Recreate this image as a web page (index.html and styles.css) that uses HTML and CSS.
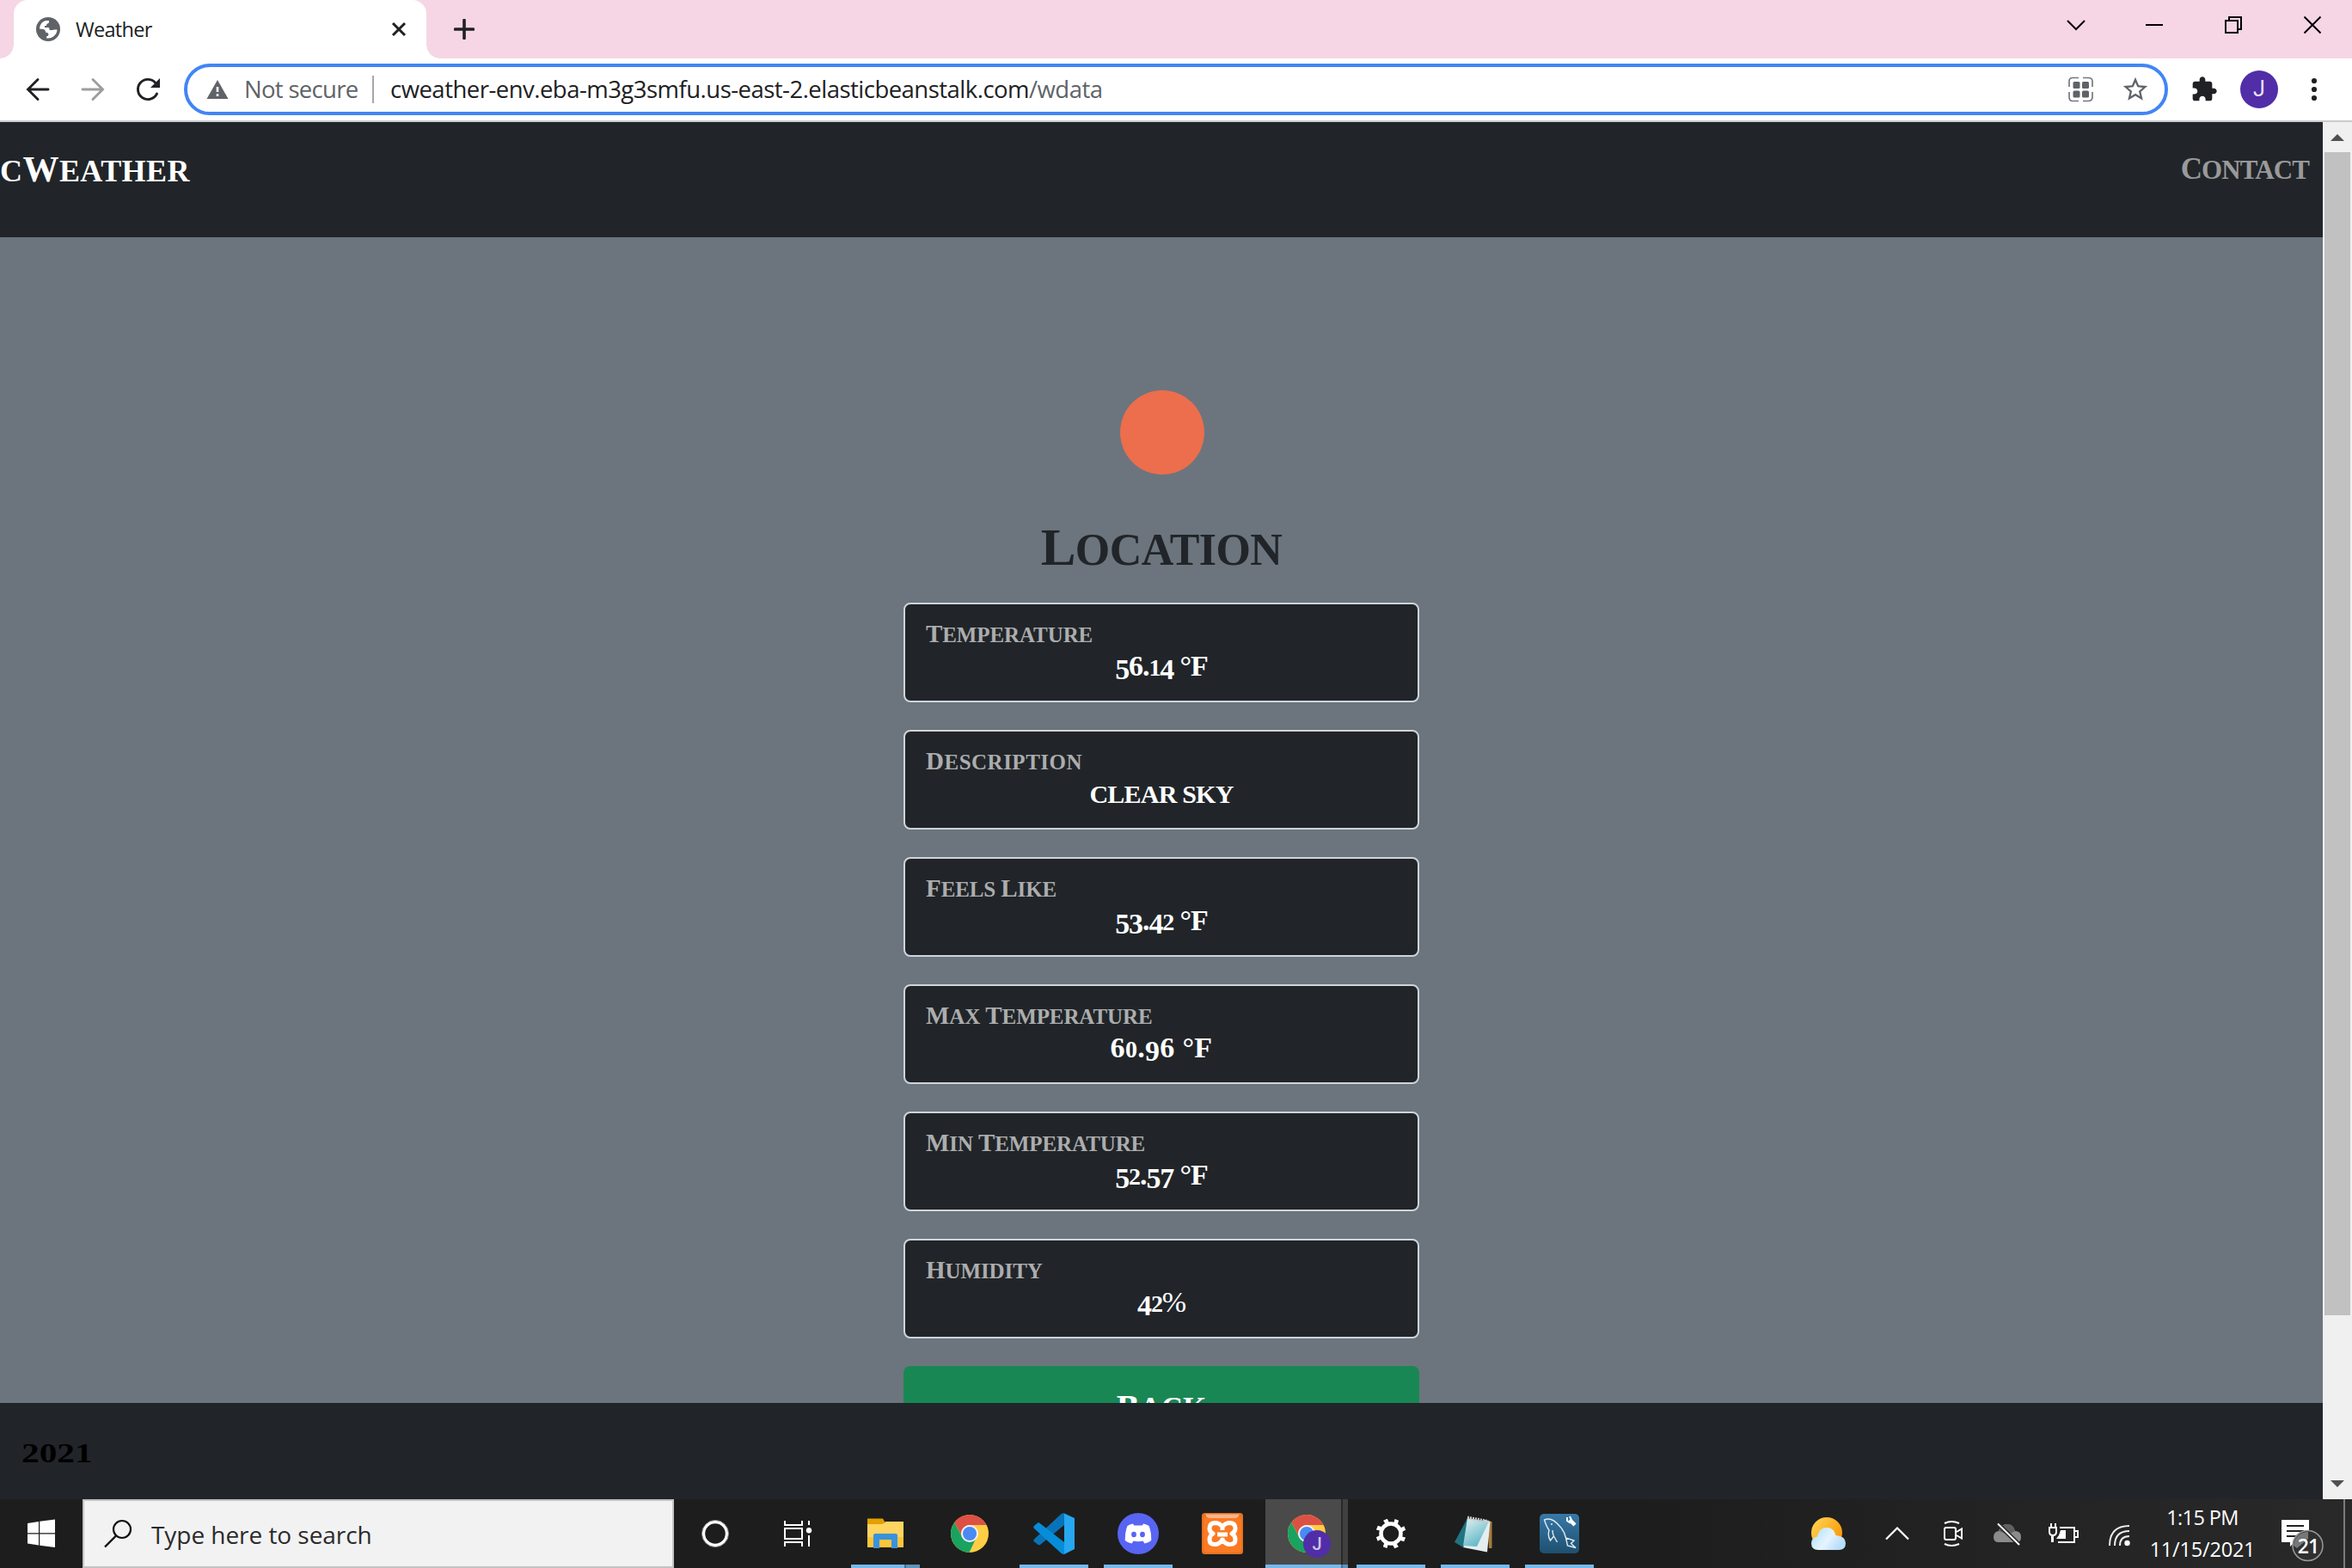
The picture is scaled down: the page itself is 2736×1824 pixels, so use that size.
FILE: index.html
```html
<!DOCTYPE html>
<html lang="en">
<head>
<meta charset="utf-8">
<title>Weather</title>
<link rel="stylesheet" href="styles.css">
</head>
<body>
<div class="tabstrip">
  <div class="tab">
    <svg width="28" height="28" viewBox="0 0 28 28"><circle cx="14" cy="14" r="14" fill="#5f6368"/><path fill="#fff" d="M4 13.5A10 10 0 0 1 11 4H15V5.5Q15 7.5 13 7.5Q12 8 12 10H10V12H14Q15.500 12 15.500 14V15H18Q20 15 20.500 14.500L24.500 14.500A10.500 10.500 0 0 1 12 24.200V22.500Q14.500 22 14.500 20Q14.500 18 12 17.800H11Q11 14.500 8.500 14Z"/></svg>
    <span class="tab-title">Weather</span>
    <svg class="tab-close" width="18" height="18" viewBox="0 0 18 18"><path d="M2 2L16 16M16 2L2 16" stroke="#202124" stroke-width="3"/></svg>
  </div>
  <svg class="new-tab" width="24" height="24" viewBox="0 0 24 24"><path d="M12 1.500V22.500M1.500 12H22.500" stroke="#202124" stroke-width="3.600" stroke-linecap="round"/></svg>
  <div class="window-buttons">
    <svg width="92" height="58" viewBox="0 0 92 58"><path d="M37 24L47 34L57 24" fill="none" stroke="#000" stroke-width="2"/></svg>
    <svg width="92" height="58" viewBox="0 0 92 58"><path d="M36 29H56" stroke="#000" stroke-width="2"/></svg>
    <svg width="92" height="58" viewBox="0 0 92 58"><path d="M37 24H51V38H37ZM41 24V20H55V34H51" fill="none" stroke="#000" stroke-width="2"/></svg>
    <svg width="92" height="58" viewBox="0 0 92 58"><path d="M36.500 19.500L55.500 38.500M55.500 19.500L36.500 38.500" stroke="#000" stroke-width="2"/></svg>
  </div>
</div>
<div class="toolbar">
  <svg class="nav-button" viewBox="0 0 64 72"><path d="M44 36H21M32 24.500L20.500 36L32 47.500" fill="none" stroke="#202124" stroke-width="2.900" stroke-linecap="round"/></svg>
  <svg class="nav-button" viewBox="0 0 64 72"><path d="M20 36H43M32 24.500L43.500 36L32 47.500" fill="none" stroke="#9c9d9f" stroke-width="2.900" stroke-linecap="round"/></svg>
  <svg class="nav-button" viewBox="0 0 64 72"><path d="M42.500 41A11.600 11.600 0 1 1 40.500 28" fill="none" stroke="#202124" stroke-width="2.900" stroke-linecap="round"/><path d="M46 23V34H35Z" fill="#202124"/></svg>
  <div class="omnibox">
    <svg width="26" height="22" viewBox="0 0 26 22"><path d="M13 0L25.500 22H.500Z" fill="#5f6368"/><path d="M11.700 8H14.300V14H11.700ZM11.700 16.200H14.300V19H11.700Z" fill="#fff"/></svg>
    <span class="security">Not secure</span>
    <span class="separator"></span>
    <span class="url"><span class="host">cweather-env.eba-m3g3smfu.us-east-2.elasticbeanstalk.com</span><span class="path">/wdata</span></span>
    <svg class="qr" width="30" height="30" viewBox="0 0 30 30"><path d="M13 1.500H6Q2 1.500 2 5.500V12M18 1.500H24Q29 1.500 29 5.500V12M2 18V24Q2 28.500 6 28.500H13M18 28.500H24Q29 28.500 29 24V18" fill="none" stroke="#77797d" stroke-width="1.700"/><g fill="#5f6368"><rect x="6.500" y="6" width="8" height="8" rx="1.500"/><rect x="17" y="6" width="8" height="8" rx="1.500"/><rect x="6.500" y="16.500" width="8" height="8" rx="1.500"/><rect x="17" y="16.500" width="8" height="8" rx="1.500"/></g></svg>
    <svg width="34" height="34" viewBox="0 0 24 24"><path fill="#5f6368" d="M22 9.240l-7.190-.62L12 2 9.190 8.630 2 9.240l5.460 4.730L5.820 21 12 17.270 18.180 21l-1.630-7.030L22 9.240zM12 15.400l-3.760 2.270 1-4.280-3.320-2.880 4.380-.38L12 6.100l1.710 4.040 4.380.38-3.320 2.880 1 4.280L12 15.400z"/></svg>
  </div>
  <svg class="extensions" width="32" height="32" viewBox="0 0 24 24"><path fill="#202124" d="M20.500 11H19V7c0-1.100-.9-2-2-2h-4V3.500C13 2.120 11.880 1 10.500 1S8 2.120 8 3.500V5H4c-1.100 0-1.990.9-1.990 2v3.800H3.500c1.490 0 2.700 1.210 2.700 2.700s-1.210 2.700-2.700 2.700H2V20c0 1.100.9 2 2 2h3.800v-1.500c0-1.490 1.210-2.700 2.700-2.700 1.490 0 2.700 1.210 2.700 2.700V22H17c1.100 0 2-.9 2-2v-4h1.500c1.380 0 2.500-1.120 2.500-2.500S21.880 11 20.500 11z"/></svg>
  <span class="avatar">J</span>
  <svg class="menu" width="8" height="28" viewBox="0 0 8 28"><g fill="#202124"><circle cx="4" cy="4" r="3.100"/><circle cx="4" cy="14" r="3.100"/><circle cx="4" cy="24" r="3.100"/></g></svg>
</div>
<div class="viewport">
  <div class="page">
    <header class="navbar">
      <span class="brand">c<span class="cap">W</span>eather</span>
      <span class="contact"><span class="cap">C</span>ontact</span>
    </header>
    <main class="content">
      <svg class="sun" width="98" height="98" viewBox="0 0 98 98"><circle cx="49" cy="49" r="49" fill="#ec6e4c"/></svg>
      <h1 class="location"><span class="cap">L</span>ocation</h1>
      <div class="cards">
        <div class="card"><div class="label"><span class="cap">T</span>emperature</div><div class="value"><span class="low">5</span>6.<span class="short">1</span><span class="low">4</span> °F</div></div>
        <div class="card"><div class="label roomy"><span class="cap">D</span>escription</div><div class="value"><span class="words">clear sky</span></div></div>
        <div class="card"><div class="label"><span class="cap">F</span>eels <span class="cap">L</span>ike</div><div class="value"><span class="low">53</span>.<span class="low">4</span><span class="short">2</span> °F</div></div>
        <div class="card"><div class="label"><span class="cap">M</span>ax <span class="cap">T</span>emperature</div><div class="value wide">6<span class="short">0</span>.<span class="low">9</span>6 °F</div></div>
        <div class="card"><div class="label"><span class="cap">M</span>in <span class="cap">T</span>emperature</div><div class="value"><span class="low">5</span><span class="short">2</span>.<span class="low">57</span> °F</div></div>
        <div class="card"><div class="label"><span class="cap">H</span>umidity</div><div class="value"><span class="low">4</span><span class="short">2</span><span class="percent">%</span></div></div>
        <div class="back"><span class="cap">B</span>ack</div>
      </div>
    </main>
    <footer class="footer"><span class="year">2021</span></footer>
  </div>
  <div class="scrollbar">
    <svg width="16" height="8" viewBox="0 0 16 8"><path d="M0 8L8 0L16 8Z" fill="#505050"/></svg>
    <div class="thumb"></div>
    <svg class="down" width="16" height="8" viewBox="0 0 16 8"><path d="M0 0L8 8L16 0Z" fill="#505050"/></svg>
  </div>
</div>
<div class="taskbar">
  <svg class="start" width="96" height="80" viewBox="0 0 96 80"><path fill="#fff" d="M32 28L45 26V39.300H32ZM46.200 25.800L64 23.500V39.300H46.200ZM32 40.600H45V53.500L32 51.500ZM46.200 40.600H64V56L46.200 53.700Z"/></svg>
  <div class="search">
    <svg width="34" height="34" viewBox="0 0 34 34"><circle cx="22" cy="12" r="10" fill="none" stroke="#111" stroke-width="2.200"/><path d="M15 19.500L2 32.500" stroke="#111" stroke-width="2.400"/></svg>
    <span>Type here to search</span>
  </div>
  <svg width="96" height="80" viewBox="0 0 96 80"><circle cx="48" cy="40" r="13.500" fill="none" stroke="#fff" stroke-width="3.400"/><circle cx="48" cy="40" r="15.600" fill="none" stroke="#888" stroke-width="1"/></svg>
  <svg width="96" height="80" viewBox="0 0 96 80"><path d="M33 25V30H53V25M33 34H53V46H33ZM33 55V50H53V55M61 25V30M61 42V55" fill="none" stroke="#fff" stroke-width="2"/><circle cx="61" cy="36.300" r="3.200" fill="#fff"/></svg>
  <div class="apps">
    <div class="app running folder-running">
      <svg width="80" height="80" viewBox="0 0 80 80"><path d="M19 22.500H37L39 26V31H19Z" fill="#e3a000"/><path d="M19 29H36Q38 29 40 26H61V56H19Z" fill="#ffd460"/><path d="M19 44H61V56H19Z" fill="#fcc63c"/><path d="M26 57V42Q26 40 28 40H52Q54 40 54 42V57H47V47H33V57Z" fill="#3a92dc"/></svg>
    </div>
    <div class="app">
      <svg width="80" height="80" viewBox="0 0 80 80"><g id="chrome"><circle cx="40" cy="40" r="22" fill="#ffce44"/><path d="M22.300 27A22 22 0 0 1 59.500 30H40A10 10 0 0 0 31 43Z" fill="#dd5144"/><path d="M22.300 27A22 22 0 0 0 39.500 62L47 46Q37 51 31.300 44Z" fill="#1aa260"/><circle cx="40" cy="40" r="10" fill="#f1f1f1"/><circle cx="40" cy="40" r="8" fill="#4a8af4"/></g></svg>
    </div>
    <div class="app running">
      <svg width="80" height="80" viewBox="0 0 80 80"><path d="M52 16L52 30L24 53Q22 54 20.500 52L17 49.500Q15.500 48 17 46.500L48 17.500Q50 16 52 16Z" fill="#0873b8"/><path d="M52 64V50L23 27.500Q22 26.500 20.500 28L17 31Q15.500 32.500 17 34L48 62.500Q50 64 52 64Z" fill="#078cd8"/><path d="M51 16L64 22V58L51 64.500Q52 64 52 62V18Q52 16 51 16Z" fill="#26a7f0"/></svg>
    </div>
    <div class="app running">
      <svg width="80" height="80" viewBox="0 0 80 80"><circle cx="40" cy="40" r="24" fill="#5865f2"/><path d="M34 28.500Q30 29 27.500 31Q24.500 38 24.800 48Q28 51 32.500 51.500L34.500 48.500Q40 50 45.500 48.500L47.500 51.500Q52 51 55.200 48Q55.500 38 52.500 31Q50 29 46 28.500L44.800 30.500H35.200Z" fill="#fff"/><ellipse cx="35" cy="41" rx="2.900" ry="3.200" fill="#5865f2"/><ellipse cx="45" cy="41" rx="2.900" ry="3.200" fill="#5865f2"/></svg>
    </div>
    <div class="app">
      <svg width="80" height="80" viewBox="0 0 80 80"><rect x="16" y="16" width="48" height="48" rx="3.500" fill="#e57220"/><rect x="18" y="20" width="44" height="42" rx="4" fill="#fb7a24"/><path d="M20 17.500H60Q58 22 54 22H26Q22 22 20 17.500Z" fill="#f9b58a"/><path d="M40 32Q37 27.500 31 27.500Q25 28 25 34Q25 38 29 40Q25 42 25 47Q25 52.500 31 52.500Q37 52.500 40 47Q43 52.500 49 52.500Q55 52.500 55 47Q55 42 51 40Q55 38 55 34Q55 28 49 27.500Q43 27.500 40 32ZM34 41H46M40 32V36M40 45V49" fill="none" stroke="#fff" stroke-width="5" stroke-linejoin="round"/></svg>
    </div>
    <div class="app active">
      <svg width="80" height="80" viewBox="0 0 80 80"><use href="#chrome"/><circle cx="52" cy="52" r="16" fill="#512da8"/></svg>
      <span class="profile">J</span>
    </div>
    <div class="app running">
      <svg width="80" height="80" viewBox="0 0 80 80"><circle cx="40" cy="40" r="11.500" fill="none" stroke="#fff" stroke-width="4.500"/><g id="teeth" fill="#fff"><path id="tooth" d="M36.500 29L35.500 22.500H40.500L41 28Z" transform="rotate(-22 40 40) translate(2 0)"/><use href="#tooth" transform="rotate(45 40 40)"/><use href="#tooth" transform="rotate(90 40 40)"/><use href="#tooth" transform="rotate(135 40 40)"/><use href="#tooth" transform="rotate(180 40 40)"/><use href="#tooth" transform="rotate(225 40 40)"/><use href="#tooth" transform="rotate(270 40 40)"/><use href="#tooth" transform="rotate(315 40 40)"/></g></svg>
    </div>
    <div class="app running">
      <svg width="80" height="80" viewBox="0 0 80 80"><defs><linearGradient id="paper" x1="0" y1="0" x2=".6" y2="1"><stop offset="0" stop-color="#e6f3f3"/><stop offset="1" stop-color="#5cb5c6"/></linearGradient></defs><path d="M54 25L59.500 26V57H56Z" fill="#a67c3e"/><path d="M52 24L57.500 26L54 61.500L26 56L35 28Z" fill="#e5edef"/><path d="M31 22L16 50L26 56L40 25Z" fill="#1f7481"/><path d="M31 22L56 26L42 55L26 54Z" fill="url(#paper)"/><path d="M31 21.500L55 26" stroke="#c8c8c8" stroke-width="4" stroke-dasharray="2 1"/></svg>
    </div>
    <div class="app running">
      <svg width="80" height="80" viewBox="0 0 80 80"><defs><linearGradient id="sea" x1="0" y1="0" x2="0" y2="1"><stop offset="0" stop-color="#3878a8"/><stop offset="1" stop-color="#1e506f"/></linearGradient></defs><rect x="17" y="17" width="46" height="46" rx="5" fill="url(#sea)"/><path d="M33.500 43L29.500 48Q26 43 28 36Q25 32 22.500 24Q31 20 40 31Q46 37 47.500 45L57 48L53.500 51.500L59 56.500L49.500 54L47.500 45M33.500 43L37.500 50M32 36Q32 40 33.500 43M30 29H32" fill="none" stroke="#e0ebf1" stroke-width="1.400"/><path d="M52 24L58 30" stroke="#fff" stroke-width="4.500"/><path d="M49 21V25L52 27L54 24L52 20" fill="none" stroke="#fff" stroke-width="2"/></svg>
    </div>
  </div>
  <div class="tray">
    <svg width="96" height="80" viewBox="0 0 96 80"><defs><linearGradient id="sun" x1="0" y1="0" x2="1" y2=".7"><stop offset="0" stop-color="#ffd858"/><stop offset="1" stop-color="#fb9606"/></linearGradient><linearGradient id="cloud" x1="0" y1="0" x2="1" y2=".5"><stop offset="0" stop-color="#a9ddfb"/><stop offset=".6" stop-color="#e5f4ff"/><stop offset="1" stop-color="#b9dcf8"/></linearGradient></defs><circle cx="46" cy="39" r="18" fill="url(#sun)"/><path d="M36 59Q28 59 28 51Q28 45 35 43.500Q37 33 46 33Q54 33 56.500 42Q68 43 68 51Q68 59 60 59Z" fill="url(#cloud)"/></svg>
    <svg width="64" height="80" viewBox="0 0 64 80"><path d="M19 46.500L32 33.500L45 46.500" fill="none" stroke="#fff" stroke-width="2.200"/></svg>
    <svg width="64" height="80" viewBox="0 0 64 80"><rect x="23" y="33" width="13" height="14" rx="2" fill="none" stroke="#fff" stroke-width="2"/><path d="M37 38L43 34.500V45.500L37 42M23 28Q31 24 40 28M23 52Q31 56 40 52" fill="none" stroke="#fff" stroke-width="2"/></svg>
    <svg width="64" height="80" viewBox="0 0 64 80"><path d="M22 50Q16 50 16 44Q16 38 22 37Q24 29 32 29Q39 29 41 37Q48 37 48 44Q48 50 43 50Z" fill="#8b8b8b"/><path d="M22 37Q24 29 32 29Q39 29 41 37L33 41Z" fill="#606060"/><path d="M21 28.500L46 53" stroke="#262626" stroke-width="5"/><path d="M21 28.500L46 53" stroke="#fff" stroke-width="2"/></svg>
    <svg width="64" height="80" viewBox="0 0 64 80"><path d="M29 33H46V50H27M47 37H50V44H47M20 50V43M17 33H25V38Q25 42 21 42Q17 42 17 38ZM19 28V33M24 28V33M21 42V50" fill="none" stroke="#fff" stroke-width="2"/><path d="M28 42L30 36H36V46H25Z" fill="#fff"/></svg>
    <svg width="64" height="80" viewBox="0 0 64 80"><path d="M23 54Q23 31 46 31M29 54Q29 37 46 37M35 54Q35 43 46 43" fill="none" stroke="#eee" stroke-width="2"/><circle cx="43.500" cy="51" r="3.200" fill="#fff"/></svg>
    <div class="clock"><span class="time">1:15 PM</span><span class="date">11/15/2021</span></div>
    <div class="notifications">
      <svg width="80" height="80" viewBox="0 0 80 80"><path d="M10 24H42V50H25L20 55V50H10Z" fill="#fff"/><path d="M16 31H36M16 37H36M16 43H30" stroke="#222" stroke-width="2"/><circle cx="40.500" cy="54" r="17.500" fill="#303030" stroke="#999" stroke-width="1.500"/><path d="M24 54A16.500 16.500 0 0 1 41 38V46L28 57Z" fill="#777"/></svg>
      <span class="count">21</span>
    </div>
    <span class="show-desktop"></span>
  </div>
</div>
</body>
</html>
```
FILE: styles.css
```css
* { box-sizing: border-box; }
body { margin: 0; width: 2736px; height: 1824px; overflow: hidden; display: flex; flex-direction: column; font-family: "Open Sans", "Noto Sans", sans-serif; }
svg { display: block; flex: none; }

.tabstrip { height: 68px; flex: none; display: flex; align-items: center; background: #f6d6e4; padding-left: 16px; }
.tab { position: relative; width: 480px; height: 68px; display: flex; align-items: center; padding: 0 23px 0 26px; background: #fff; border-radius: 16px 16px 0 0; }
.tab::before, .tab::after { content: ""; position: absolute; bottom: 0; width: 16px; height: 16px; }
.tab::before { left: -16px; background: radial-gradient(circle at 0 0, transparent 15.5px, #fff 16px); }
.tab::after { right: -16px; background: radial-gradient(circle at 100% 0, transparent 15.5px, #fff 16px); }
.tab-title { margin-left: 18px; padding-bottom: 1px; font-size: 23.5px; letter-spacing: -.7px; color: #202124; }
.tab-close { margin-left: auto; }
.new-tab { margin-left: 32px; }
.window-buttons { display: flex; margin-left: auto; align-self: flex-start; }

.toolbar { height: 74px; flex: none; display: flex; align-items: center; padding: 0 40px 0 12px; background: #fff; border-bottom: 2px solid #c9cbcd; }
.nav-button { width: 64px; height: 72px; }
.omnibox { width: 2308px; height: 60px; margin-left: 10px; display: flex; align-items: center; padding: 0 17px 0 22px; border: 4px solid #4285f4; border-radius: 30px; font-size: 27.5px; color: #5f6368; white-space: nowrap; }
.security { margin-left: 18px; width: 136px; padding-bottom: 1px; letter-spacing: -.7px; }
.separator { width: 2px; height: 32px; margin-left: 13px; background: #a5a7aa; }
.url { margin-left: 19px; padding-bottom: 1px; letter-spacing: -.52px; }
.host { color: #202124; }
.qr { margin-left: auto; margin-right: 32px; }
.extensions { margin-left: 26px; }
.avatar { width: 44px; height: 44px; margin-left: 26px; border-radius: 50%; background: #512da8; color: #ece5f7; font: 25px/44px Roboto, sans-serif; text-align: center; }
.menu { margin-left: auto; }

.viewport { flex: 1; min-height: 0; display: flex; }
.page { flex: 1; display: flex; flex-direction: column; font-family: "Liberation Serif", serif; font-weight: bold; text-transform: uppercase; }
.cap { line-height: 0; }
.navbar { height: 134px; flex: none; display: flex; justify-content: space-between; background: #212529; padding-right: 16px; }
.brand { color: #fff; font-size: 36px; line-height: 114px; letter-spacing: .45px; }
.brand .cap { font-size: 42px; }
.contact { color: #999a9b; font-size: 31px; line-height: 112px; letter-spacing: -.9px; }
.contact .cap { font-size: 35px; }
.content { flex: 1; min-height: 0; overflow: hidden; display: flex; flex-direction: column; align-items: center; padding-top: 178px; background: #6c757d; }
.sun { margin-left: 2px; }
.location { margin: 48px 0 21px; font-size: 52px; line-height: 80px; letter-spacing: -.6px; color: #212529; }
.location .cap { font-size: 61px; }
.cards { width: 600px; display: flex; flex-direction: column; gap: 32px; }
.card { height: 116px; flex: none; padding: 21px 24px 0; border: 2px solid #ced4da; border-radius: 8px; background: #212529; }
.label { font-size: 25px; line-height: 30px; letter-spacing: -.1px; color: #acadae; }
.label .cap { font-size: 29px; }
.roomy { letter-spacing: .5px; }
.value { margin-top: 1px; font-size: 34px; line-height: 40px; letter-spacing: -1.1px; text-align: center; color: #fff; }
.wide { letter-spacing: .3px; }
.short { font-size: 28px; line-height: 0; }
.low { vertical-align: -4px; line-height: 0; }
.words { font-size: 30px; letter-spacing: -.8px; }
.percent { font-weight: normal; }
.back { height: 116px; flex: none; border-radius: 8px; background: #198754; color: #fff; font-size: 35px; line-height: 100px; text-align: center; }
.back .cap { font-size: 40px; }
.footer { height: 112px; flex: none; padding: 2px 0 0 25px; background: #212529; color: #000; font-size: 32px; line-height: 112px; overflow: hidden; }
.year { display: inline-block; transform: scaleX(1.29); transform-origin: left; }
.scrollbar { width: 34px; display: flex; flex-direction: column; align-items: center; padding: 14px 0; background: #f0f0f0; }
.thumb { width: 30px; height: 1353px; margin-top: 13px; background: #c1c1c1; }
.down { margin-top: auto; }

.taskbar { height: 80px; flex: none; display: flex; background: linear-gradient(90deg, #1d1d1d 70%, #292929); }
.search { width: 688px; display: flex; align-items: center; padding-left: 22px; border: 2px solid #c3c3c3; background: #f2f2f2; color: #2b2b2b; font-size: 28px; letter-spacing: -.05px; }
.search span { margin-left: 22px; padding-top: 2px; }
.apps { display: flex; gap: 18px; margin-left: 14px; }
.app { position: relative; width: 80px; height: 80px; }
.running { box-shadow: inset 0 -4px #76b9ed; }
.folder-running { background: linear-gradient(90deg, transparent 62px, #446e90 62px 64px, #5f93bd 64px) bottom / 100% 4px no-repeat; box-shadow: none; }
.folder-running::before { content: ""; position: absolute; left: 0; bottom: 0; width: 62px; height: 4px; background: #76b9ed; }
.active { width: 96px; margin: 0 -8px; padding-left: 8px; background: linear-gradient(90deg, #76b9ed 88px, #446e90 88px 90px, #5f93bd 90px) bottom / 100% 4px no-repeat, linear-gradient(90deg, #4a4a4a 88px, #292929 88px 90px, #404040 90px); }
.profile { position: absolute; left: 44px; top: 36px; width: 32px; font: 500 20px/32px Roboto, sans-serif; text-align: center; color: #d0c5e9; }
.tray { display: flex; margin-left: auto; color: #fff; }
.clock { width: 134px; display: flex; flex-direction: column; align-items: center; font-size: 23.5px; line-height: 37px; padding-top: 3px; letter-spacing: -.6px; }
.date { letter-spacing: -.2px; }
.notifications { position: relative; width: 82px; margin-left: 15px; }
.count { position: absolute; left: 23px; top: 38px; width: 36px; font-size: 23px; line-height: 32px; font-weight: 600; letter-spacing: -1px; text-align: center; }
.show-desktop { width: 10px; border-left: 2px solid #7b7b7b; }
```
